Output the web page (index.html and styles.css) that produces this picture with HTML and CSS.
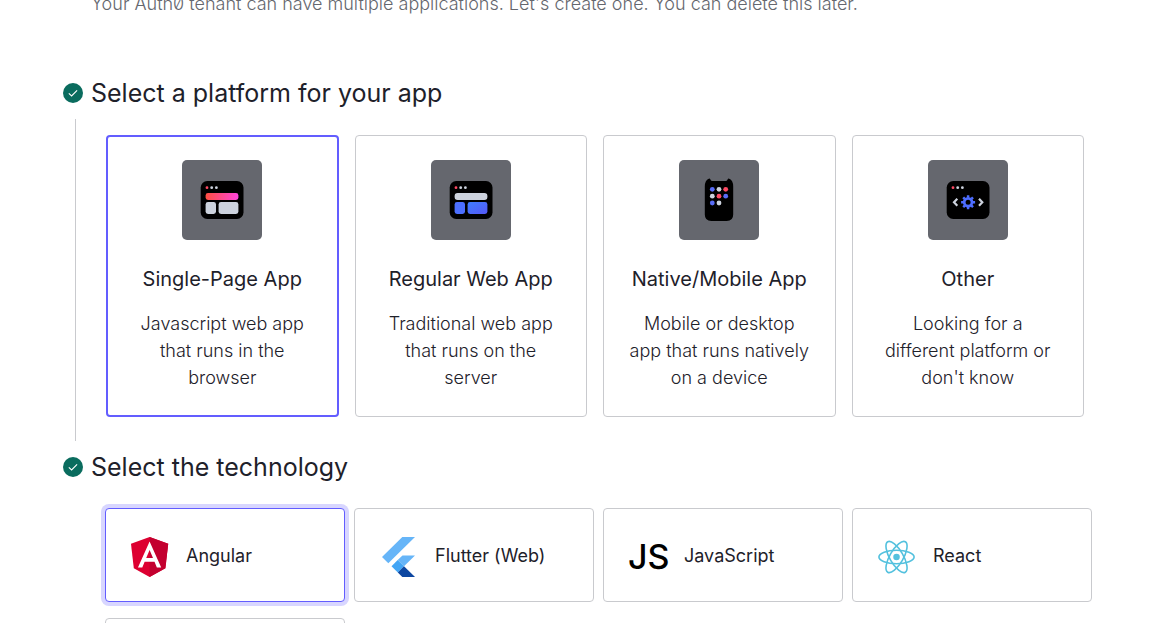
FILE: index.html
```html
<!DOCTYPE html>
<html lang="en">
<head>
<meta charset="utf-8">
<title>Create application</title>
<link rel="stylesheet" href="styles.css">
</head>
<body>
<main class="page">
  <p class="intro">Your Auth0 tenant can have multiple applications. Let's create one. You can delete this later.</p>

  <section class="step">
    <h2 class="step-title">
      <svg class="check" viewBox="0 0 20 20" aria-hidden="true"><circle cx="10" cy="10" r="10" fill="#0a6c5e"/><path d="M5.8 10.4l2.8 2.5 5.5-5.5" fill="none" stroke="#fff" stroke-width="1.1"/></svg>
      Select a platform for your app
    </h2>
    <div class="step-body platforms">
      <button class="platform selected" type="button" aria-pressed="true">
        <svg class="platform-icon" viewBox="0 0 80 80" aria-hidden="true">
          <defs><linearGradient id="pink"><stop offset="0" stop-color="#ff4f40"/><stop offset="1" stop-color="#ff44dd"/></linearGradient></defs>
          <rect x="18.7" y="21" width="42.8" height="38" rx="6.5"/>
          <circle cx="25" cy="27.7" r="1.4" fill="#ff4963"/><circle cx="29.7" cy="27.7" r="1.4" fill="#ccd2dd"/><circle cx="34.4" cy="27.7" r="1.4" fill="#ccd2dd"/>
          <rect x="23.6" y="33" width="32.8" height="7" rx="2.4" fill="url(#pink)"/>
          <rect x="23.6" y="42" width="10.4" height="12" rx="2.4" fill="#ccd2dd"/><rect x="36.6" y="42" width="19.8" height="12" rx="2.4" fill="#ccd2dd"/>
        </svg>
        <span class="platform-name">Single-Page App</span>
        <span class="platform-text">Javascript web app that runs in the browser</span>
      </button>
      <button class="platform" type="button" aria-pressed="false">
        <svg class="platform-icon" viewBox="0 0 80 80" aria-hidden="true">
          <defs><linearGradient id="blue" x1="0" y1="0" x2="1" y2="1"><stop offset="0" stop-color="#3f7dff"/><stop offset="1" stop-color="#5558f5"/></linearGradient></defs>
          <rect x="18.7" y="21" width="42.8" height="38" rx="6.5"/>
          <circle cx="25" cy="27.7" r="1.4" fill="#ff4963"/><circle cx="29.7" cy="27.7" r="1.4" fill="#ccd2dd"/><circle cx="34.4" cy="27.7" r="1.4" fill="#ccd2dd"/>
          <rect x="23.6" y="33" width="32.8" height="7" rx="3" fill="#ccd2dd"/>
          <rect x="23.6" y="42" width="10.4" height="12" rx="2.4" fill="#4c6fff"/><rect x="36.6" y="42" width="19.8" height="12" rx="2.4" fill="url(#blue)"/>
        </svg>
        <span class="platform-name">Regular Web App</span>
        <span class="platform-text">Traditional web app that runs on the server</span>
      </button>
      <button class="platform" type="button" aria-pressed="false">
        <svg class="platform-icon" viewBox="0 0 80 80" aria-hidden="true">
          <path d="M25.8 26.5q0-6.3 4-7.8 1.200-.4 1.600.8.500 1.500 2 1.500h13.200q1.500 0 2-1.500.4-1.200 1.600-.8 4 1.500 4 7.800v28q0 6.500-6.500 6.500H32.300q-6.500 0-6.500-6.500z"/>
          <g fill="#586cf6"><circle cx="33.300" cy="29.300" r="2.400"/><circle cx="46.700" cy="36.200" r="2.400"/><circle cx="33.300" cy="43" r="2.400"/></g>
          <g fill="#ccd2dd"><circle cx="40" cy="29.300" r="2.400"/><circle cx="33.300" cy="36.200" r="2.400"/><circle cx="40" cy="43" r="2.400"/></g>
          <g fill="#ff4963"><circle cx="46.700" cy="29.300" r="2.400"/><circle cx="40" cy="36.200" r="2.400"/></g>
        </svg>
        <span class="platform-name">Native/Mobile App</span>
        <span class="platform-text">Mobile or desktop app that runs natively on a device</span>
      </button>
      <button class="platform" type="button" aria-pressed="false">
        <svg class="platform-icon" viewBox="0 0 80 80" aria-hidden="true">
          <rect x="18.7" y="21" width="42.8" height="38" rx="6.5"/>
          <circle cx="25" cy="27.7" r="1.4" fill="#ff4963"/><circle cx="29.7" cy="27.7" r="1.4" fill="#ccd2dd"/><circle cx="34.4" cy="27.7" r="1.4" fill="#ccd2dd"/>
          <path d="M29.300 38.800l-3.300 3.500 3.300 3.500M51 38.800l3.300 3.500-3.300 3.500" fill="none" stroke="#ccd2dd" stroke-width="2.200"/>
          <g transform="translate(40.100 42.200)" stroke="#4d6dff">
            <circle r="3.900" fill="none" stroke-width="2.800"/>
            <path d="M0-4.800V-7M0 4.800V7M-4.800 0H-7M4.800 0H7M3.400-3.400L4.900-4.900M-3.400-3.400L-4.900-4.900M3.400 3.400L4.900 4.900M-3.400 3.400L-4.900 4.900" stroke-width="2.500"/>
          </g>
        </svg>
        <span class="platform-name">Other</span>
        <span class="platform-text">Looking for a different platform or don't know</span>
      </button>
    </div>
  </section>

  <section class="step">
    <h2 class="step-title">
      <svg class="check" viewBox="0 0 20 20" aria-hidden="true"><circle cx="10" cy="10" r="10" fill="#0a6c5e"/><path d="M5.8 10.4l2.8 2.5 5.5-5.5" fill="none" stroke="#fff" stroke-width="1.1"/></svg>
      Select the technology
    </h2>
    <div class="step-body technologies">
      <button class="tech focused" type="button" aria-pressed="true">
        <svg class="tech-icon" viewBox="27 30 200 200" aria-hidden="true"><path fill="#dd0031" d="M125 30L31.900 63.200l14.200 123.100L125 230l78.900-43.700 14.200-123.100z"/><path fill="#c3002f" d="M125 30v200l78.900-43.700 14.200-123.100z"/><path fill="#fff" d="M125 52.100L66.800 182.600h21.700l11.700-29.200h49.400l11.700 29.200H183L125 52.100zm17 83.300h-34l17-40.900z"/></svg>
        Angular
      </button>
      <button class="tech" type="button" aria-pressed="false">
        <svg class="tech-icon" viewBox="0 0 40 40" aria-hidden="true"><path fill="#66b5f8" d="M23.300 0H36L9.300 26.200 3 20zM23.500 18.400H36L25 29.300 18.700 23.100z"/><path fill="#42a5f5" d="M12.500 29.300l6.200-6.200 6.300 6.200-6.200 6.200z"/><path fill="#0d47a1" d="M18.800 35.500l6.200-6.200L36 40H23.300z"/></svg>
        Flutter (Web)
      </button>
      <button class="tech" type="button" aria-pressed="false">
        <span class="tech-icon tech-letters" aria-hidden="true">JS</span>
        JavaScript
      </button>
      <button class="tech" type="button" aria-pressed="false">
        <svg class="tech-icon" viewBox="-12.200 -12.500 25 25" aria-hidden="true"><circle r="2.050" fill="#53c1de"/><g fill="none" stroke="#53c1de"><ellipse rx="11" ry="4.200"/><ellipse rx="11" ry="4.200" transform="rotate(60)"/><ellipse rx="11" ry="4.200" transform="rotate(120)"/></g></svg>
        React
      </button>
      <div class="tech"></div>
    </div>
  </section>
</main>
</body>
</html>
```
FILE: styles.css
```css
* { box-sizing: border-box; }

body {
  margin: 0;
  height: 100vh;
  overflow: hidden;
  background: #fff;
  color: #1e212a;
  font-family: Inter, "Liberation Sans", sans-serif;
}

.page {
  margin-top: -10px;
  padding: 0 64px 0 63px;
}

.intro {
  margin: 0 0 57px;
  padding-left: 28px;
  color: #65676e;
  font-size: 18px;
  font-weight: 300;
  line-height: 28px;
  font-feature-settings: "zero";
}

.step-title {
  display: flex;
  align-items: center;
  gap: 8px;
  margin: 0 0 8px;
  font-size: 25px;
  font-weight: 400;
  line-height: 36px;
}

.check { width: 20px; height: 20px; flex: none; }

.step-body {
  display: grid;
  margin-left: 12px;
  border-left: 1px solid #c9cace;
}

.platforms {
  grid-template-columns: repeat(4, 1fr);
  gap: 16px;
  margin-bottom: 8px;
  padding: 16px 8px 24px 30px;
}

.technologies {
  grid-template-columns: repeat(4, 1fr);
  gap: 16px 9px;
  padding: 15px 0 24px 29px;
  border-left-color: transparent;
}

.platform,
.tech {
  border: 1px solid #c9cace;
  border-radius: 4px;
  background: #fff;
  color: inherit;
  font-family: inherit;
  cursor: pointer;
}

.platform {
  display: flex;
  flex-direction: column;
  align-items: center;
  min-height: 282px;
  padding: 24px;
}

.platform.selected {
  padding: 23px;
  border: 2px solid #635dff;
}

.platform-icon {
  width: 80px;
  height: 80px;
  margin-bottom: 24px;
  border-radius: 5px;
  background: #65676e;
}

.platform-name {
  margin-bottom: 16px;
  font-size: 20px;
  line-height: 30px;
}

.platform-text {
  font-size: 18px;
  font-weight: 300;
  line-height: 27px;
}

.tech {
  display: flex;
  align-items: center;
  gap: 16px;
  min-height: 94px;
  padding: 0 24px;
  font-size: 18px;
}

.tech.focused {
  border-color: #635dff;
  box-shadow: 0 0 0 4px #d8d6ff;
}

.tech-icon {
  flex: none;
  width: 40px;
  height: 40px;
  margin-top: 4px;
}

.tech-letters {
  color: #000;
  font-size: 34px;
  font-weight: 500;
  line-height: 40px;
}
```
